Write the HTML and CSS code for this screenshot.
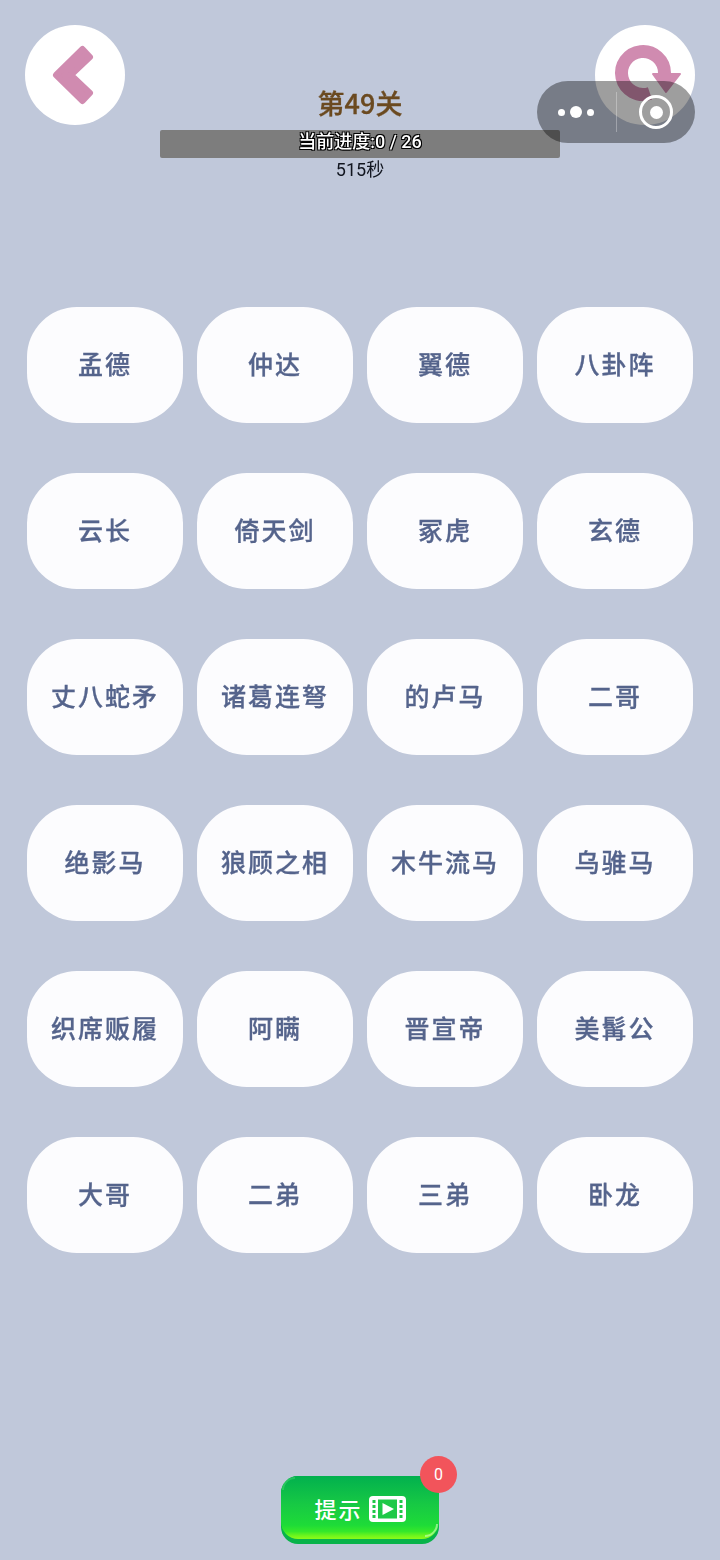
FILE: index.html
```html
<!DOCTYPE html>
<html lang="zh-CN">
<head>
  <meta charset="UTF-8">
  <title>第49关</title>
  <link rel="stylesheet" href="styles.css">
</head>
<body>
  <main class="page">
    <header class="top">
      <button class="round-btn">
        <svg width="100" height="100" viewBox="0 0 100 100">
          <path d="M57.500 24 L65 32 L46 50 L65 68 L57.500 76 L31 50 Z" fill="#d08bb0" stroke="#d08bb0" stroke-width="6" stroke-linejoin="round"/>
        </svg>
      </button>
      <div class="status">
        <h1 class="level">第49关</h1>
        <div class="progress">当前进度:0 / 26</div>
        <div class="timer">515秒</div>
      </div>
      <button class="round-btn">
        <svg width="100" height="100" viewBox="0 0 100 100">
          <path d="M69.500 48 A21.500 21.500 0 1 0 55 68.300" fill="none" stroke="#d08bb0" stroke-width="13"/>
          <path d="M58 49 L85 49 L71 67 Z" fill="#d08bb0" stroke="#d08bb0" stroke-width="2" stroke-linejoin="round"/>
        </svg>
      </button>
    </header>

    <!-- miniprogram menu capsule floats over the reset button -->
    <div class="capsule">
      <div class="capsule-dots"><i></i><i class="big"></i><i></i></div>
      <div class="capsule-line"></div>
      <div class="capsule-close"><i></i></div>
    </div>

    <section class="cards">
      <div class="card">孟德</div>
      <div class="card">仲达</div>
      <div class="card">翼德</div>
      <div class="card">八卦阵</div>
      <div class="card">云长</div>
      <div class="card">倚天剑</div>
      <div class="card">冢虎</div>
      <div class="card">玄德</div>
      <div class="card">丈八蛇矛</div>
      <div class="card">诸葛连弩</div>
      <div class="card">的卢马</div>
      <div class="card">二哥</div>
      <div class="card">绝影马</div>
      <div class="card">狼顾之相</div>
      <div class="card">木牛流马</div>
      <div class="card">乌骓马</div>
      <div class="card">织席贩履</div>
      <div class="card">阿瞒</div>
      <div class="card">晋宣帝</div>
      <div class="card">美髯公</div>
      <div class="card">大哥</div>
      <div class="card">二弟</div>
      <div class="card">三弟</div>
      <div class="card">卧龙</div>
    </section>

    <div class="hint">
      <div class="hint-face">
        <span class="hint-label">提示</span>
        <svg width="37" height="26" viewBox="0 0 37 26">
          <rect width="37" height="26" rx="4" fill="#fff"/>
          <path d="M3.500 4h3v3h-3zM3.500 9h3v3h-3zM3.500 14h3v3h-3zM3.500 19h3v3h-3zM30.500 4h3v3h-3zM30.500 9h3v3h-3zM30.500 14h3v3h-3zM30.500 19h3v3h-3z" fill="#1fc948"/>
          <rect x="9" y="3.500" width="19" height="19" fill="#1fc948"/>
          <path d="M13.500 7 L25 13 L13.500 19 Z" fill="#fff"/>
        </svg>
      </div>
      <span class="badge">0</span>
    </div>
  </main>
</body>
</html>
```

FILE: styles.css
```css
* {
  box-sizing: border-box;
}
body {
  margin: 0;
  font-family: "Noto Sans CJK SC", "Noto Sans", sans-serif;
  background: #c0c8da;
}
.page {
  position: relative;
  height: 1560px;
  overflow: hidden;
  display: flex;
  flex-direction: column;
}

/* header */
.top {
  display: grid;
  grid-template-columns: 100px 1fr 100px;
  padding: 25px 25px 0;
}
.round-btn {
  width: 100px;
  height: 100px;
  padding: 0;
  border: none;
  border-radius: 50%;
  background: #fff;
}
.round-btn svg {
  display: block;
}
.status {
  display: flex;
  flex-direction: column;
  align-items: center;
  padding-top: 60px;
}
.level {
  margin: 0;
  height: 45px;
  font-size: 27px;
  line-height: 36px;
  font-weight: 500;
  color: #6b4a20;
  -webkit-text-stroke: 0.3px #6b4a20;
}
.progress {
  width: 400px;
  height: 28px;
  border-radius: 2px;
  background: #7d7d7d;
  color: #fff;
  font-family: "Roboto", "Noto Sans CJK SC", sans-serif;
  font-size: 18px;
  font-weight: 500;
  line-height: 24px;
  text-align: center;
  text-shadow: 1px 1px 0 #000, -1px -1px 0 #000, 1px -1px 0 #000, -1px 1px 0 #000;
}
.timer {
  font-family: "Roboto", "Noto Sans CJK SC", sans-serif;
  font-size: 18px;
  line-height: 24px;
  color: #11151f;
}

.capsule {
  position: absolute;
  top: 81px;
  left: 537px;
  width: 158px;
  height: 62px;
  display: flex;
  align-items: center;
}
/* the pill darkens whatever lies under it, the icons stay white */
.capsule::before {
  content: "";
  position: absolute;
  inset: 0;
  border-radius: 31px;
  background: #9e9e9e;
  mix-blend-mode: multiply;
}
.capsule-dots {
  position: relative;
  width: 77px;
  display: flex;
  justify-content: center;
  align-items: center;
  gap: 5px;
}
.capsule-dots i {
  width: 7px;
  height: 7px;
  border-radius: 50%;
  background: #fff;
}
.capsule-dots i.big {
  width: 12px;
  height: 12px;
}
.capsule-line {
  position: relative;
  width: 1px;
  height: 40px;
  margin-left: 2px;
  background: rgba(255, 255, 255, 0.3);
}
.capsule-close {
  position: relative;
  width: 34px;
  height: 34px;
  margin-left: 22px;
  border: 3px solid #fff;
  border-radius: 50%;
  display: flex;
  align-items: center;
  justify-content: center;
}
.capsule-close i {
  width: 13px;
  height: 13px;
  border-radius: 50%;
  background: #fff;
}

/* answer cards */
.cards {
  display: grid;
  grid-template-columns: repeat(4, 156px);
  grid-auto-rows: 116px;
  column-gap: 14px;
  row-gap: 50px;
  margin-top: 125px;
  padding-left: 27px;
}
.card {
  display: flex;
  align-items: center;
  justify-content: center;
  padding-bottom: 4px;
  background: #fcfcfe;
  border-radius: 50px;
  color: #55648c;
  font-size: 25px;
  font-weight: 500;
  letter-spacing: 2px;
  -webkit-text-stroke: 0.3px #55648c;
}

/* hint button */
.hint {
  position: relative;
  align-self: center;
  width: 158px;
  height: 68px;
  margin-top: auto;
  margin-bottom: 16px;
  border-radius: 17px;
  background: #08b34a;
}
.hint-face {
  position: relative;
  height: 63px;
  border-radius: 17px;
  background: linear-gradient(#02b04e 0%, #17c944 45%, #1edb38 78%, #35e82a 88%, #70f51c 95%, #8cfb18 100%);
  display: flex;
  align-items: center;
  justify-content: center;
  gap: 6px;
  padding-top: 3px;
}
/* glossy crescents on two corners */
.hint-face::before,
.hint-face::after {
  content: "";
  position: absolute;
  width: 22px;
  height: 22px;
  border-radius: 50%;
  border: 2px solid transparent;
}
.hint-face::before {
  top: 1px;
  left: 1px;
  border-top-color: rgba(170, 255, 170, 0.2);
  transform: rotate(-45deg);
}
.hint-face::after {
  right: 1px;
  bottom: 2px;
  border-bottom-color: rgba(205, 255, 190, 0.6);
  transform: rotate(-45deg);
}
.hint-label {
  margin-bottom: 3px;
  color: #fff;
  font-size: 22px;
  font-weight: 500;
  letter-spacing: 2px;
}
.badge {
  position: absolute;
  top: -20px;
  right: -18px;
  width: 37px;
  height: 37px;
  border-radius: 50%;
  background: #f2545b;
  color: #fff;
  font-family: "Roboto", sans-serif;
  font-size: 16px;
  line-height: 37px;
  text-align: center;
}
```
